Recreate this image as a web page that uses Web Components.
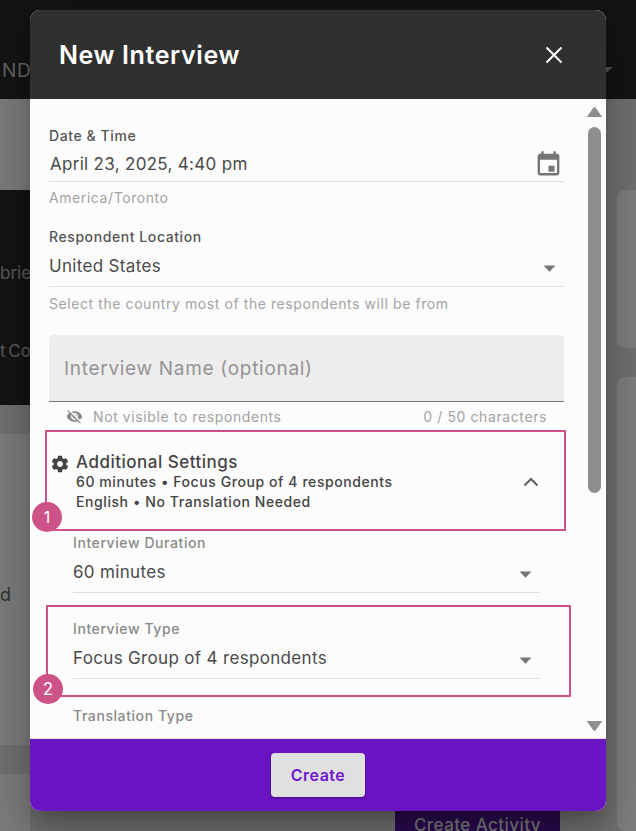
<!DOCTYPE html>
<html>
<head>
<meta charset="utf-8">
<style>
  html, body { margin: 0; height: 100%; }
  body { width: 636px; height: 831px; overflow: hidden; position: relative; font-family: Inter, "Liberation Sans", sans-serif; }
</style>
</head>
<body>
<page-backdrop></page-backdrop>
<interview-dialog heading="New Interview">
  <date-field label="Date &amp; Time" value="April 23, 2025, 4:40 pm" hint="America/Toronto"></date-field>
  <select-field label="Respondent Location" value="United States" hint="Select the country most of the respondents will be from"></select-field>
  <name-field></name-field>
  <settings-summary></settings-summary>
  <select-field nested label="Interview Duration" value="60 minutes"></select-field>
  <select-field nested marked="2" label="Interview Type" value="Focus Group of 4 respondents"></select-field>
  <select-field nested label="Translation Type"></select-field>
</interview-dialog>

<script>
const caret = `<svg width="13" height="7" viewBox="0 0 13 7"><path d="M0.500 .5h12L6.500 6.800z" fill="#757575"/></svg>`;

class PageBackdrop extends HTMLElement {
  constructor() {
    super();
    this.attachShadow({ mode: 'open' }).innerHTML = `
      <style>
        :host { display: block; width: 636px; height: 831px; background: #707070; overflow: hidden; color: #333; font-size: 18px; letter-spacing: .6px; }
        .top { height: 99px; background: #141414; display: flex; justify-content: space-between; align-items: center; padding: 41px 23px 0 2px; box-sizing: border-box; color: #666; font-size: 19px; }
        .main { display: grid; grid-template-columns: 30px 576px 1fr; height: 732px; }
        .left { display: flex; flex-direction: column; overflow: hidden; }
        .left .gap { height: 91px; background: #7c7c7c; }
        .left .dark { height: 215px; box-sizing: border-box; padding-top: 73px; background: #141414; color: #5c5c5c; display: flex; flex-direction: column; gap: 58px; white-space: nowrap; overflow: hidden; font-size: 17px; letter-spacing: 0; }
        .left .dark span + span { word-spacing: -2px; }
        .left .strip { height: 29px; background: #707070; }
        .left .rest { flex: 1; background: #7c7c7c; display: flex; flex-direction: column; padding-top: 150px; }
        .band { height: 29px; margin-top: 140px; background: #707070; }
        .mid { display: flex; flex-direction: column; justify-content: flex-end; align-items: flex-end; }
        .cta { width: 165px; height: 20px; margin-right: 46px; background: #2a0b4e; color: #7a7a7a; font-weight: 500; font-size: 17px; letter-spacing: .45px; text-align: center; line-height: 28px; overflow: hidden; }
        .right { padding: 91px 0 0 11px; display: flex; flex-direction: column; gap: 29px; }
        .card { background: #7e7e7e; border-radius: 8px 0 0 8px; height: 158px; }
        .card + .card { flex: 1; }
      </style>
      <div class="top"><span>ND</span><svg width="14" height="6" viewBox="0 0 14 6"><path d="M0 0h14L7 6z" fill="#555"/></svg></div>
      <div class="main">
        <div class="left">
          <div class="gap"></div>
          <div class="dark"><span>brie</span><span>t Co</span></div>
          <div class="strip"></div>
          <div class="rest"><span>d</span><div class="band"></div></div>
        </div>
        <div class="mid"><div class="cta">Create Activity</div></div>
        <div class="right"><div class="card"></div><div class="card"></div></div>
      </div>`;
  }
}

class InterviewDialog extends HTMLElement {
  constructor() {
    super();
    this.attachShadow({ mode: 'open' }).innerHTML = `
      <style>
        :host { position: absolute; left: 30px; top: 10px; width: 576px; height: 801px; display: flex; flex-direction: column; border-radius: 10px; background: #fcfcfc; box-shadow: 0 11px 15px -7px rgba(0,0,0,.2), 0 24px 38px 3px rgba(0,0,0,.14), 0 9px 46px 8px rgba(0,0,0,.12); }
        header { height: 89px; flex: none; background: #303030; color: #fff; display: flex; align-items: center; justify-content: space-between; padding: 1px 43px 0 29px; box-sizing: border-box; border-radius: 10px 10px 0 0; }
        h1 { margin: 0; font-size: 25px; font-weight: 600; letter-spacing: .6px; }
        .body { flex: 1; position: relative; overflow: hidden; padding: 28px 42px 0 19px; display: flex; flex-direction: column; }
        .scroll { position: absolute; right: 4px; top: 0; bottom: 0; width: 15px; }
        .track { position: absolute; left: 1px; top: 28px; width: 13px; height: 366px; border-radius: 7px; background: #8e8e8e; }
        .up, .down { position: absolute; left: 0; }
        .up { top: 7px; } .down { bottom: 6px; }
        footer { height: 73px; box-sizing: border-box; flex: none; background: #6a14c4; display: flex; align-items: center; justify-content: center; border-top: 1px solid #e0e0e0; border-radius: 0 0 10px 10px; }
        button { font: inherit; font-size: 16px; font-weight: 600; letter-spacing: .5px; color: #6f14d0; background: #e0e0e0; border: 0; border-radius: 4px; width: 94px; height: 44px; box-shadow: 0 1px 3px rgba(0,0,0,.4); }
      </style>
      <header>
        <h1>${this.getAttribute('heading')}</h1>
        <svg width="18" height="18" viewBox="0 0 18 18"><path d="M1.500 1.500l15 15M16.500 1.500l-15 15" stroke="#fff" stroke-width="2" fill="none"/></svg>
      </header>
      <div class="body">
        <slot></slot>
        <div class="scroll">
          <svg class="up" width="15" height="11" viewBox="0 0 15 11"><path d="M7.500 1L14.500 10.500H.5z" fill="#8e8e8e" stroke="#8e8e8e" stroke-linejoin="round"/></svg>
          <div class="track"></div>
          <svg class="down" width="15" height="11" viewBox="0 0 15 11"><path d="M7.500 10L14.500 .5H.5z" fill="#8e8e8e" stroke="#8e8e8e" stroke-linejoin="round"/></svg>
        </div>
      </div>
      <footer><button>Create</button></footer>`;
  }
}

const fieldCss = `
  :host { display: block; flex: none; color: #4a4a4a; font-size: 17px; letter-spacing: .33px; }
  .label { font-size: 14px; font-weight: 500; color: #555; line-height: 18px; letter-spacing: .58px; }
  .row { display: flex; justify-content: space-between; align-items: center; border-bottom: 1px solid #ddd; }
  .hint { font-size: 14px; color: #a3a3a3; line-height: 18px; margin-top: 7px; letter-spacing: .58px; }
`;

class DateField extends HTMLElement {
  constructor() {
    super();
    this.attachShadow({ mode: 'open' }).innerHTML = `
      <style>${fieldCss}
        :host { margin-bottom: 21px; }
        .row { height: 34px; padding-top: 2px; }
        .row span { margin-left: 1px; letter-spacing: .3px; }
      </style>
      <div class="label">${this.getAttribute('label')}</div>
      <div class="row"><span>${this.getAttribute('value')}</span>
        <svg width="29" height="29" viewBox="0 0 24 24" style="margin-right:1px"><path fill="#757575" d="M19 3h-1V1h-2v2H8V1H6v2H5C3.890 3 3 3.900 3 5v14c0 1.100.89 2 2 2h14c1.100 0 2-.9 2-2V5c0-1.100-.9-2-2-2zm0 16H5V8h14v11zm-2-6h-5v5h5v-5z"/></svg>
      </div>
      <div class="hint">${this.getAttribute('hint')}</div>`;
  }
}

class SelectField extends HTMLElement {
  constructor() {
    super();
    const hint = this.getAttribute('hint');
    const value = this.getAttribute('value');
    const marked = this.getAttribute('marked');
    this.attachShadow({ mode: 'open' }).innerHTML = `
      <style>${fieldCss}
        :host { margin-bottom: ${hint ? 22 : marked ? 28 : 27}px; position: relative; }
        :host([nested]) { margin-left: 24px; margin-right: 24px; }
        :host([nested]) .label { color: #8a8a8a; }
        .row { height: 40px; }
        .row svg { margin: 4px 8px 0 0; }
        .hint { margin-top: 8px; }
        .box { position: absolute; left: -27px; right: -31px; top: -15px; height: 88px; border: 2px solid #cd5287; pointer-events: none; }
        .num { position: absolute; left: -40px; top: 54px; width: 30px; height: 30px; border-radius: 50%; background: #cd5287; color: #fff; font-size: 17px; letter-spacing: 0; display: flex; align-items: center; justify-content: center; }
      </style>
      <div class="label">${this.getAttribute('label')}</div>
      ${value ? `<div class="row"><span>${value}</span>${caret}</div>` : ''}
      ${hint ? `<div class="hint">${hint}</div>` : ''}
      ${marked ? `<div class="box"></div><div class="num">${marked}</div>` : ''}`;
  }
}

class NameField extends HTMLElement {
  constructor() {
    super();
    this.attachShadow({ mode: 'open' }).innerHTML = `
      <style>
        :host { display: block; flex: none; margin-bottom: -2px; font-size: 14px; letter-spacing: .6px; color: #a3a3a3; }
        .input { height: 66px; background: #ededed; border-radius: 5px 5px 0 0; border-bottom: 1px solid #757575; padding-left: 15px; display: flex; align-items: center; color: #949494; font-size: 19px; letter-spacing: .7px; }
        .meta { display: flex; align-items: center; justify-content: space-between; padding: 0 17px 2px; box-sizing: border-box; height: 30px; }
        .left { display: flex; align-items: center; gap: 10px; }
      </style>
      <div class="input">Interview Name (optional)</div>
      <div class="meta">
        <span class="left">
          <svg width="17" height="17" viewBox="0 0 24 24"><path fill="#8a8a8a" d="M12 7c2.760 0 5 2.240 5 5 0 .65-.13 1.260-.36 1.830l2.920 2.920c1.510-1.260 2.700-2.890 3.430-4.750-1.730-4.390-6-7.500-11-7.500-1.400 0-2.740.25-3.980.7l2.160 2.160C10.740 7.130 11.350 7 12 7zM2 4.270l2.280 2.280.46.46C3.080 8.300 1.780 10.020 1 12c1.730 4.390 6 7.500 11 7.500 1.550 0 3.030-.3 4.380-.84l.42.42L19.730 22 21 20.730 3.270 3 2 4.270zM7.530 9.800l1.550 1.550c-.05.21-.08.43-.08.65 0 1.660 1.340 3 3 3 .22 0 .44-.03.65-.08l1.550 1.550c-.67.33-1.410.53-2.200.53-2.760 0-5-2.240-5-5 0-.79.2-1.530.53-2.200zm4.310-.78l3.150 3.150.02-.16c0-1.660-1.340-3-3-3l-.17.01z"/></svg>
          <span>Not visible to respondents</span>
        </span>
        <span>0 / 50 characters</span>
      </div>`;
  }
}

class SettingsSummary extends HTMLElement {
  constructor() {
    super();
    this.attachShadow({ mode: 'open' }).innerHTML = `
      <style>
        :host { display: block; flex: none; position: relative; height: 101px; margin: 0 -2px 3px -4px; box-sizing: border-box; border: 2px solid #cd5287; color: #444; }
        .wrap { display: flex; align-items: flex-start; padding: 20px 0 0 3px; }
        .text { margin-left: 6px; }
        .title { font-size: 17px; font-weight: 500; line-height: 20px; letter-spacing: .5px; }
        .line { font-size: 14px; font-weight: 500; line-height: 20px; letter-spacing: .58px; }
        .gear { margin-top: 2px; }
        .chev { position: absolute; right: 25px; top: 45px; }
        .num { position: absolute; left: -15px; top: 70px; width: 30px; height: 30px; border-radius: 50%; background: #cd5287; color: #fff; font-size: 16px; display: flex; align-items: center; justify-content: center; }
      </style>
      <div class="wrap">
        <svg class="gear" width="20" height="20" viewBox="0 0 24 24"><path fill="#444" d="M19.430 12.980c.04-.32.07-.64.07-.98s-.03-.66-.07-.98l2.110-1.650c.19-.15.24-.42.12-.64l-2-3.460c-.12-.22-.39-.3-.61-.22l-2.490 1c-.52-.4-1.080-.73-1.690-.98l-.38-2.650C14.460 2.180 14.250 2 14 2h-4c-.25 0-.46.18-.49.42l-.38 2.650c-.61.25-1.170.59-1.690.98l-2.490-1c-.23-.09-.49 0-.61.22l-2 3.460c-.13.22-.07.49.12.64l2.110 1.650c-.04.32-.07.65-.07.98s.03.66.07.98l-2.110 1.650c-.19.15-.24.42-.12.64l2 3.460c.12.22.39.3.61.22l2.490-1c.52.4 1.080.73 1.690.98l.38 2.650c.03.24.24.42.49.42h4c.25 0 .46-.18.49-.42l.38-2.650c.61-.25 1.170-.59 1.690-.98l2.490 1c.23.09.49 0 .61-.22l2-3.460c.12-.22.07-.49-.12-.64l-2.110-1.650zM12 15.500c-1.930 0-3.500-1.570-3.500-3.500s1.570-3.500 3.500-3.500 3.500 1.570 3.500 3.500-1.570 3.500-3.500 3.500z"/></svg>
        <div class="text">
          <div class="title">Additional Settings</div>
          <div class="line">60 minutes • Focus Group of 4 respondents</div>
          <div class="line">English • No Translation Needed</div>
        </div>
      </div>
      <svg class="chev" width="16" height="10" viewBox="0 0 16 10"><path d="M1.500 8.500L8 2l6.500 6.500" stroke="#666" stroke-width="2.200" fill="none"/></svg>
      <div class="num">1</div>`;
  }
}

customElements.define('page-backdrop', PageBackdrop);
customElements.define('interview-dialog', InterviewDialog);
customElements.define('date-field', DateField);
customElements.define('select-field', SelectField);
customElements.define('name-field', NameField);
customElements.define('settings-summary', SettingsSummary);
</script>
</body>
</html>
